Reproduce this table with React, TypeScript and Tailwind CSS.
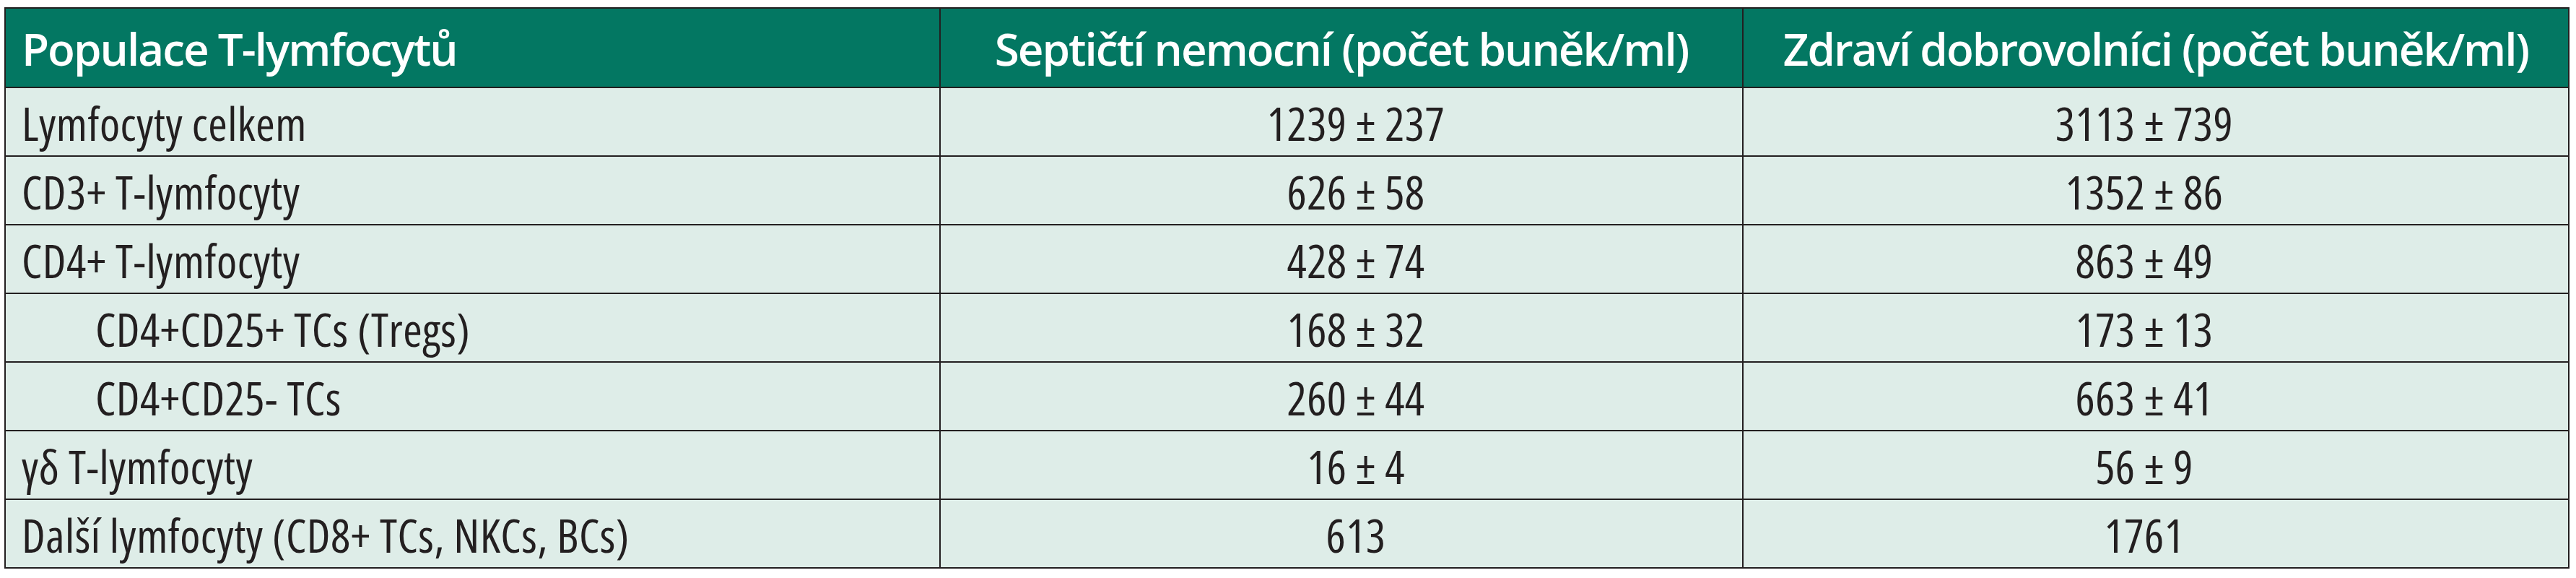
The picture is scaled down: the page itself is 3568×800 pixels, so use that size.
import React from "react";

type Row = { label: string; indent?: boolean; a: string; b: string };

const rows: Row[] = [
  { label: "Lymfocyty celkem", a: "1239 ± 237", b: "3113 ± 739" },
  { label: "CD3+ T-lymfocyty", a: "626 ± 58", b: "1352 ± 86" },
  { label: "CD4+ T-lymfocyty", a: "428 ± 74", b: "863 ± 49" },
  { label: "CD4+CD25+ TCs (Tregs)", indent: true, a: "168 ± 32", b: "173 ± 13" },
  { label: "CD4+CD25- TCs", indent: true, a: "260 ± 44", b: "663 ± 41" },
  { label: "γδ T-lymfocyty", a: "16 ± 4", b: "56 ± 9" },
  { label: "Další lymfocyty (CD8+ TCs, NKCs, BCs)", a: "613", b: "1761" },
];

export default function App() {
  return (
    <div className="bg-white w-[3568px] h-[800px] pt-[10px] pl-[6px] font-['Open_Sans',sans-serif] text-[#231f20]">
      <div className="w-[3553px] border-2 border-[#231f20] grid grid-cols-[1295px_1112px_1142px]">
        <div className="h-[110px] bg-[#037762] border-r-2 border-b-2 border-[#231f20] flex items-center pl-[22px] pt-[2px] text-white font-semibold text-[62px] leading-none tracking-[-2px] [font-stretch:90%]">
          Populace T-lymfocytů
        </div>
        <div className="h-[110px] bg-[#037762] border-r-2 border-b-2 border-[#231f20] flex items-center justify-center pt-[2px] text-white font-semibold text-[62px] leading-none tracking-[-2px] [font-stretch:90%]">
          Septičtí nemocní (počet buněk/ml)
        </div>
        <div className="h-[110px] bg-[#037762] border-b-2 border-[#231f20] flex items-center justify-center pt-[2px] text-white font-semibold text-[62px] leading-none tracking-[-2px] [font-stretch:90%]">
          Zdraví dobrovolníci (počet buněk/ml)
        </div>
        {rows.map((r, i) => {
          const last = i === rows.length - 1;
          return (
            <React.Fragment key={r.label}>
              <div
                className={
                  "bg-[#deede8] border-r-2 border-[#231f20] flex items-center pt-[4px] text-[64px] leading-none tracking-[0.5px] [font-stretch:75%] " +
                  (r.indent ? "pl-[124px] " : "pl-[22px] ") +
                  (last ? "h-[93px]" : "h-[95px] border-b-2")
                }
              >
                {r.label}
              </div>
              <div
                className={
                  "bg-[#deede8] border-r-2 border-[#231f20] flex items-center justify-center pt-[4px] pl-[40px] text-[64px] leading-none tracking-[0.5px] [font-stretch:75%] " +
                  (last ? "h-[93px]" : "h-[95px] border-b-2")
                }
              >
                {r.a}
              </div>
              <div
                className={
                  "bg-[#deede8] border-[#231f20] flex items-center justify-center pt-[4px] pr-[32px] text-[64px] leading-none tracking-[0.5px] [font-stretch:75%] " +
                  (last ? "h-[93px]" : "h-[95px] border-b-2")
                }
              >
                {r.b}
              </div>
            </React.Fragment>
          );
        })}
      </div>
    </div>
  );
}
